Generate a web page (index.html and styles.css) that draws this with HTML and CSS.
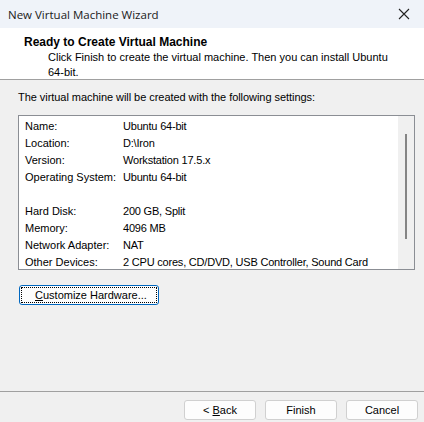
FILE: index.html
```html
<!DOCTYPE html>
<html>
<head>
<meta charset="utf-8">
<link rel="stylesheet" href="styles.css">
</head>
<body>
<div class="window">
  <div class="titlebar">
    <span class="title">New Virtual Machine Wizard</span>
    <svg class="close" width="12" height="12" viewBox="0 0 12 12"><path d="M1 1 L11 11 M11 1 L1 11" stroke="#222" stroke-width="1.1" fill="none"/></svg>
  </div>
  <div class="header">
    <div class="h-title">Ready to Create Virtual Machine</div>
    <div class="h-sub">Click Finish to create the virtual machine. Then you can install Ubuntu 64-bit.</div>
  </div>
  <div class="content">
    <div class="intro">The virtual machine will be created with the following settings:</div>
    <div class="listbox">
      <div class="rows">
        <div class="row"><span class="k">Name:</span><span>Ubuntu 64-bit</span></div>
        <div class="row"><span class="k">Location:</span><span>D:\Iron</span></div>
        <div class="row"><span class="k">Version:</span><span>Workstation 17.5.x</span></div>
        <div class="row"><span class="k">Operating System:</span><span>Ubuntu 64-bit</span></div>
        <div class="row"></div>
        <div class="row"><span class="k">Hard Disk:</span><span>200 GB, Split</span></div>
        <div class="row"><span class="k">Memory:</span><span>4096 MB</span></div>
        <div class="row"><span class="k">Network Adapter:</span><span>NAT</span></div>
        <div class="row"><span class="k">Other Devices:</span><span>2 CPU cores, CD/DVD, USB Controller, Sound Card</span></div>
      </div>
      <div class="scrollbar"><div class="thumb"></div></div>
    </div>
    <div class="custom-wrap">
      <button class="btn focus"><span class="dots"><u>C</u>ustomize Hardware...</span></button>
    </div>
  </div>
  <div class="footer">
    <button class="btn nav">&lt; <u>B</u>ack</button>
    <button class="btn nav">Finish</button>
    <button class="btn nav">Cancel</button>
  </div>
</div>
</body>
</html>
```
FILE: styles.css
```css
html, body {
  margin: 0;
  padding: 0;
}
body {
  width: 424px;
  height: 422px;
  overflow: hidden;
  background: #f0f0f0;
  font-family: "Liberation Sans", Arial, sans-serif;
  font-size: 11px;
  color: #000;
}
.window {
  display: flex;
  flex-direction: column;
  height: 422px;
}
.titlebar {
  height: 28px;
  flex: none;
  background: #eff3f9;
  display: flex;
  align-items: center;
  justify-content: space-between;
  padding: 0 14px 0 8px;
  box-sizing: border-box;
}
.title {
  font-family: "Open Sans", "Noto Sans", sans-serif;
  font-size: 11.5px;
  color: #1a1a1a;
}
.close {
  display: block;
}
.header {
  background: #fff;
  height: 52px;
  flex: none;
  box-sizing: border-box;
  padding: 7px 18px 0 24px;
  border-bottom: 1px solid #a0a0a0;
}
.h-title {
  font-weight: bold;
  font-size: 12px;
  line-height: 15px;
}
.h-sub {
  padding-left: 24px;
  line-height: 14.5px;
}
.content {
  flex: 1;
  padding: 10px 9px 0 18px;
  display: flex;
  flex-direction: column;
}
.intro {
  line-height: 14px;
  letter-spacing: -0.05px;
}
.listbox {
  margin-top: 11px;
  height: 155px;
  border: 1px solid #8b8e94;
  background: #fff;
  display: flex;
  box-sizing: border-box;
}
.rows {
  flex: 1;
  padding: 2px 0 0 6px;
}
.row {
  height: 17px;
  line-height: 17px;
  display: flex;
  white-space: nowrap;
}
.row span:last-child {
  letter-spacing: -0.2px;
}
.k {
  width: 98px;
  flex: none;
}
.scrollbar {
  width: 16px;
  background: #f0f0f0;
  display: flex;
  justify-content: center;
  padding-top: 18px;
  box-sizing: border-box;
}
.thumb {
  width: 2px;
  height: 105px;
  background: #858585;
}
.custom-wrap {
  margin-top: 15px;
  padding-left: 1px;
}
.btn {
  font-family: "Liberation Sans", Arial, sans-serif;
  font-size: 11px;
  color: #000;
  background: #fdfdfd;
  border: 1px solid #d0d0d0;
  border-radius: 3px;
  height: 20px;
  padding: 0;
  box-sizing: border-box;
}
.btn.focus {
  width: 140px;
  border: 1px solid #0067c0;
  padding: 1px;
}
.dots {
  display: block;
  height: 16px;
  line-height: 14px;
  border: 1px dotted #000;
  box-sizing: border-box;
  text-align: left;
  padding-left: 13px;
}
.footer {
  height: 31px;
  flex: none;
  border-top: 1px solid #a0a0a0;
  display: flex;
  justify-content: flex-end;
  align-items: flex-start;
  gap: 9px;
  padding: 8px 6px 0 0;
  box-sizing: border-box;
}
.btn.nav {
  width: 72px;
}
```
